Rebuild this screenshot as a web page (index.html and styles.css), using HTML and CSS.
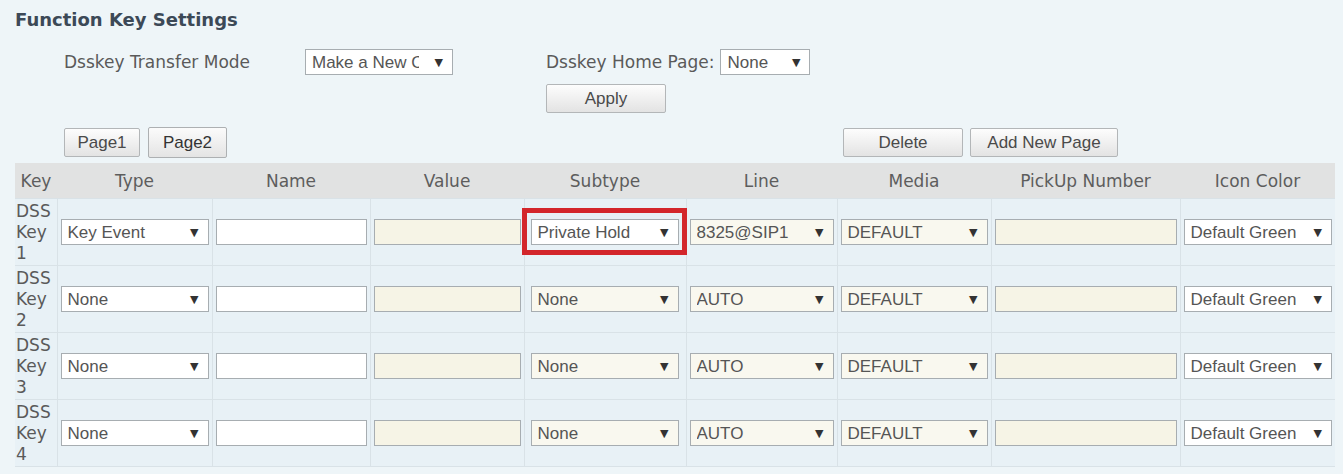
FILE: index.html
```html
<!DOCTYPE html>
<html lang="en">
<head>
  <meta charset="UTF-8">
  <meta name="viewport" content="width=device-width, initial-scale=1">
  <title>Function Key Settings</title>
  <link rel="stylesheet" href="styles.css">
</head>
<body>

  <div class="page">
    <h2 class="title">Function Key Settings</h2>

    <div class="opts">
      <span class="lbl">Dsskey Transfer Mode</span>
      <span class="dd mode-dd">
        <select><option>Make a New Call</option></select>
      </span>
      <span class="home">
        <span class="lbl">Dsskey Home Page:</span>
        <span class="dd home-dd">
          <select><option>None</option></select>
        </span>
      </span>
      <span></span>
      <span></span>
      <button class="btn apply-btn">Apply</button>
    </div>

    <div class="toolbar">
      <div class="pages">
        <button class="btn page-btn">Page1</button>
        <button class="btn page-btn active">Page2</button>
      </div>
      <div class="page-actions">
        <button class="btn delete-btn">Delete</button>
        <button class="btn add-btn">Add New Page</button>
      </div>
    </div>

    <table class="keys">
      <colgroup>
        <col style="width:42px">
        <col style="width:155px">
        <col style="width:158px">
        <col style="width:154px">
        <col style="width:162px">
        <col style="width:151px">
        <col style="width:154px">
        <col style="width:189px">
        <col style="width:155px">
      </colgroup>
      <thead>
        <tr>
          <th>Key</th>
          <th>Type</th>
          <th>Name</th>
          <th>Value</th>
          <th>Subtype</th>
          <th>Line</th>
          <th>Media</th>
          <th>PickUp Number</th>
          <th>Icon Color</th>
        </tr>
      </thead>
      <tbody id="keyRows">
        <!-- rows rendered below -->
      </tbody>
    </table>
  </div>

  <script>
    // DSS key rows
    const keys = [
      { type: "Key Event", subtype: "Private Hold", line: "8325@SIP1", media: "DEFAULT", color: "Default Green", marked: true },
      { type: "None", subtype: "None", line: "AUTO", media: "DEFAULT", color: "Default Green" },
      { type: "None", subtype: "None", line: "AUTO", media: "DEFAULT", color: "Default Green" },
      { type: "None", subtype: "None", line: "AUTO", media: "DEFAULT", color: "Default Green" }
    ];

    function dropdown(value, cls) {
      return `<span class="dd ${cls || ''}"><select><option>${value}</option></select></span>`;
    }

    function renderKeys() {
      const body = document.getElementById('keyRows');
      body.innerHTML = '';
      keys.forEach((key, i) => {
        const subCls = key.marked ? 'sub-dd marked' : 'sub-dd soft';
        body.innerHTML += `
          <tr>
            <td class="key-cell">DSS Key ${i + 1}</td>
            <td>${dropdown(key.type)}</td>
            <td><input type="text" class="field"></td>
            <td><input type="text" class="field soft-field"></td>
            <td class="sub-cell">${dropdown(key.subtype, subCls)}</td>
            <td>${dropdown(key.line, 'soft')}</td>
            <td>${dropdown(key.media, 'soft')}</td>
            <td><input type="text" class="field soft-field"></td>
            <td>${dropdown(key.color)}</td>
          </tr>
        `;
      });
    }

    renderKeys();
  </script>
</body>
</html>
```

FILE: styles.css
```css
body {
  margin: 0;
  background: #eef5f8;
  font-family: "DejaVu Sans", Verdana, sans-serif;
  color: #5a5a5a;
}
.page {
  width: 1320px;
  padding: 9px 8px 0 15px;
}
.title {
  margin: 0;
  font-size: 18px;
  line-height: 22px;
  font-weight: 700;
  color: #3c4957;
}
.opts {
  display: grid;
  grid-template-columns: 241px 241px auto;
  row-gap: 9px;
  align-items: center;
  margin: 18px 0 0 49px;
  font-size: 17px;
}
.home {
  display: flex;
  align-items: center;
  gap: 6px;
}
.lbl {
  white-space: nowrap;
}

/* dropdowns */
.dd {
  position: relative;
  display: block;
}
.dd::after {
  content: "\25BC";
  position: absolute;
  right: 10px;
  top: 50%;
  transform: translateY(-50%);
  font-family: "DejaVu Sans", sans-serif;
  font-size: 11px;
  color: #333;
  pointer-events: none;
}
.dd select {
  -webkit-appearance: none;
  appearance: none;
  display: block;
  width: 100%;
  height: 26px;
  margin: 0;
  padding: 0 24px 0 6px;
  border: 1px solid #a7adb1;
  border-radius: 0;
  background: #fff;
  font-family: "Liberation Sans", Arial, sans-serif;
  font-size: 17px;
  color: #555;
  overflow: hidden;
}
.dd.soft select {
  background: #f9f8ef;
}
.mode-dd {
  width: 148px;
}
.mode-dd select {
  padding-right: 33px;
}
.home-dd {
  width: 90px;
}
.marked::before {
  content: "";
  position: absolute;
  top: -11px;
  bottom: -10px;
  left: -9px;
  right: -8px;
  border: 5px solid #d3262b;
  pointer-events: none;
}

/* buttons */
.btn {
  height: 29px;
  padding: 0;
  border: 1px solid #b3b6b8;
  border-radius: 2px;
  background: linear-gradient(#fdfdfd, #e3e3e3);
  font-family: "Liberation Sans", Arial, sans-serif;
  font-size: 17px;
  color: #4a4a4a;
}
.apply-btn,
.delete-btn {
  width: 120px;
}
.add-btn {
  width: 148px;
}
.page-btn {
  width: 76px;
}
.page-btn.active {
  width: 79px;
  height: 31px;
  border-color: #adb0b2;
  background: linear-gradient(#fbfbfb, #e4e4e4);
  color: #333;
}
.toolbar {
  display: flex;
  align-items: center;
  height: 31px;
  margin-top: 14px;
}
.pages {
  display: flex;
  align-items: center;
  gap: 8px;
  margin-left: 49px;
}
.page-actions {
  display: flex;
  gap: 7px;
  margin-left: auto;
  margin-right: 217px;
}

/* key table */
.keys {
  width: 1320px;
  margin-top: 5px;
  border-collapse: collapse;
  table-layout: fixed;
}
.keys th {
  height: 35px;
  padding: 0;
  background: #e1e2e2;
  font-weight: normal;
  font-size: 17px;
  color: #5d5d5d;
  text-align: center;
}
.keys td {
  height: 66px;
  padding: 0 3px;
  background: #e8f1f6;
  border: 1px solid #d9e2e7;
  vertical-align: middle;
}
.keys tr td:first-child {
  border-left: none;
}
.keys tr td:last-child {
  border-right: none;
}
.keys td.key-cell {
  padding: 0 0 0 1px;
  font-size: 17px;
  line-height: 21px;
  color: #5a5a5a;
}
.keys td.sub-cell {
  padding: 0 7px 0 6px;
}
.field {
  display: block;
  width: 100%;
  height: 26px;
  box-sizing: border-box;
  margin: 0;
  border: 1px solid #a7adb1;
  background: #fff;
  font-family: "Liberation Sans", Arial, sans-serif;
  font-size: 17px;
}
.soft-field {
  background: #f6f4e6;
}
```
